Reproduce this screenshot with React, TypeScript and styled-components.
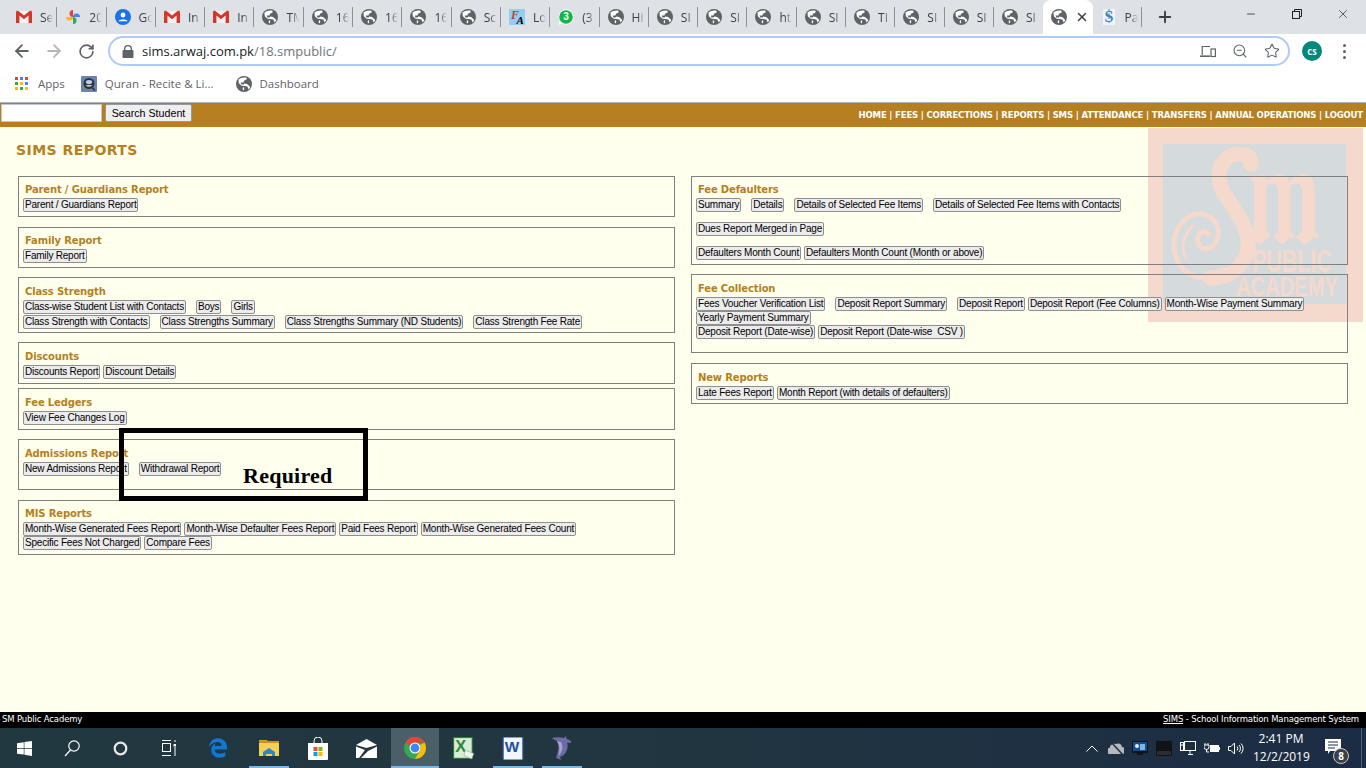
import React from 'react';
import styled, { createGlobalStyle } from 'styled-components';
import { ArrowLeft, ArrowRight, Minus, Plus, RotateCw, Star, X, ZoomOut } from 'lucide-react';
import { FaEdgeLegacy } from 'react-icons/fa';

const GlobalStyle = createGlobalStyle`
  html, body {
    margin: 0;
    padding: 0;
    height: 100%;
    overflow: hidden;
    background: #ffffee;
  }
  * { box-sizing: border-box; }
`;

const Frame = styled.div`
  display: flex;
  flex-direction: column;
  width: 1366px;
  height: 768px;
  font-family: 'Liberation Sans', Arial, sans-serif;
`;

/* browser chrome */
const TabStrip = styled.div`
  display: flex;
  align-items: center;
  height: 34px;
  padding-left: 8px;
  background: #dee1e6;
  flex: none;
`;

const Tab = styled.div<{ $active?: boolean; $noSep?: boolean }>`
  position: relative;
  display: flex;
  align-items: center;
  flex: none;
  width: 49.3px;
  height: 34px;
  padding-left: 8px;
  gap: 8px;
  border-radius: 8px 8px 0 0;
  background: ${(p) => (p.$active ? '#ffffff' : 'transparent')};
  &::after {
    content: '';
    display: ${(p) => (p.$active || p.$noSep ? 'none' : 'block')};
    position: absolute;
    right: 0;
    top: 7px;
    width: 1px;
    height: 20px;
    background: #8f9297;
  }
`;

const TabLabel = styled.span`
  width: 13px;
  overflow: hidden;
  white-space: nowrap;
  font: 12px 'Open Sans', sans-serif;
  color: #3c4043;
  -webkit-mask-image: linear-gradient(to right, #000 45%, transparent 100%);
  mask-image: linear-gradient(to right, #000 45%, transparent 100%);
`;

const NewTab = styled.div`
  display: flex;
  margin-left: 14px;
  color: #3c4043;
`;

const WindowControls = styled.div`
  display: flex;
  margin-left: auto;
  height: 100%;
  align-self: flex-start;
`;

const WindowButton = styled.div`
  display: flex;
  align-items: center;
  justify-content: center;
  width: 46px;
  height: 28px;
  color: #202124;
`;

const Toolbar = styled.div`
  display: flex;
  align-items: center;
  height: 34px;
  padding-left: 6px;
  background: #ffffff;
  flex: none;
`;

const NavButton = styled.div<{ $muted?: boolean }>`
  display: flex;
  align-items: center;
  justify-content: center;
  width: 32px;
  height: 32px;
  color: ${(p) => (p.$muted ? '#b4b6b9' : '#5f6368')};
`;

const Omnibox = styled.div`
  display: flex;
  align-items: center;
  width: 1182px;
  height: 30px;
  margin-left: 6px;
  padding-left: 12px;
  border: 2px solid #aecbfa;
  border-radius: 15px;
`;

const UrlText = styled.div`
  margin-left: 8px;
  font: 13px 'Open Sans', sans-serif;
  color: #202124;
  span { color: #70757a; }
`;

const OmniActions = styled.div`
  display: flex;
  margin-left: auto;
`;

const Avatar = styled.div`
  display: flex;
  align-items: center;
  justify-content: center;
  width: 20px;
  height: 20px;
  margin-left: 12px;
  border-radius: 50%;
  background: #00897b;
  color: #fff;
  font: bold 8px 'Open Sans', sans-serif;
`;

const MenuDots = styled.div`
  display: flex;
  flex-direction: column;
  gap: 3px;
  margin-left: 21px;
  i {
    display: block;
    width: 3px;
    height: 3px;
    border-radius: 50%;
    background: #5f6368;
  }
`;

const Bookmarks = styled.div`
  display: flex;
  align-items: center;
  height: 35px;
  padding: 0 0 3px 15px;
  background: #ffffff;
  border-bottom: 1px solid #b3b3b3;
  flex: none;
`;

const Bookmark = styled.div<{ $ml: number; $gap: number }>`
  display: flex;
  align-items: center;
  gap: ${(p) => p.$gap}px;
  margin-left: ${(p) => p.$ml}px;
  font: 11.5px 'Open Sans', sans-serif;
  color: #5f6368;
`;

/* site header */
const HeaderBar = styled.div`
  display: flex;
  align-items: center;
  justify-content: space-between;
  height: 24px;
  padding: 0 3px 4px 1px;
  background: #b67f20;
  flex: none;
`;

const SearchForm = styled.div`
  display: flex;
  gap: 3px;
`;

const SearchInput = styled.input`
  width: 101px;
  height: 18px;
  padding: 0;
  background: #fff;
  border: 1px solid #c5c5c5;
  outline: none;
`;

const SearchButton = styled.button`
  width: 87px;
  height: 18px;
  padding: 0;
  background: #efefef;
  border: 1px solid #9a9a9a;
  border-radius: 2px;
  font: 10.7px 'Liberation Sans', Arial, sans-serif;
  color: #000;
`;

const TopNav = styled.div`
  margin-top: 4px;
  font: bold 8.5px 'DejaVu Sans', Verdana, sans-serif;
  letter-spacing: -0.16px;
  white-space: pre;
  color: #fff;
`;

const Main = styled.div`
  position: relative;
  flex: 1;
  padding: 14px 18px 0;
  background: #ffffee;
`;

const Watermark = styled.svg`
  position: absolute;
  left: 1148px;
  top: 1px;
`;

const PageTitle = styled.h1`
  position: relative;
  height: 18px;
  margin: 0 0 17px -2px;
  font: bold 14px/19px 'DejaVu Sans', Verdana, sans-serif;
  letter-spacing: 0.45px;
  color: #b67f20;
`;

const Columns = styled.div`
  position: relative;
  display: grid;
  grid-template-columns: 657px 657px;
  column-gap: 16px;
  align-items: start;
`;

const Panel = styled.section<{ $h: number; $mt: number; $pt: number }>`
  height: ${(p) => p.$h}px;
  margin-top: ${(p) => p.$mt}px;
  padding: ${(p) => p.$pt}px 4px 0;
  border: 1px solid #808080;
`;

const PanelTitle = styled.h2`
  height: 14px;
  margin: 0 0 1px 2px;
  font: bold 10px/14px 'DejaVu Sans', Verdana, sans-serif;
  letter-spacing: -0.15px;
  color: #b67f20;
`;

const ButtonRow = styled.div<{ $mt: number }>`
  display: flex;
  margin-top: ${(p) => p.$mt}px;
`;

const ReportButton = styled.button<{ $wide?: boolean }>`
  height: 14px;
  margin-left: ${(p) => (p.$wide ? 10 : 3)}px;
  padding: 0 1px;
  background: #ececec;
  border: 1px solid #8f8f8f;
  border-radius: 2px;
  font: 10px/12px 'Liberation Sans', Arial, sans-serif;
  letter-spacing: -0.21px;
  color: #000;
  white-space: pre;
  &:first-child { margin-left: 0; }
`;

const Callout = styled.div`
  position: absolute;
  left: 119px;
  top: 301px;
  width: 249px;
  height: 73px;
  padding: 31px 0 0 119px;
  border: 5px solid #000;
  font: bold 22px/24px 'Liberation Serif', Cambria, serif;
  letter-spacing: 0.25px;
  color: #000;
`;

const Footer = styled.div`
  display: flex;
  align-items: center;
  justify-content: space-between;
  height: 16px;
  padding: 0 7px 2px 2px;
  background: #000;
  font: 8.5px 'DejaVu Sans', Tahoma, sans-serif;
  letter-spacing: -0.15px;
  color: #fff;
  flex: none;
  u { text-decoration: underline; }
`;

/* windows taskbar */
const Taskbar = styled.div`
  display: flex;
  align-items: stretch;
  height: 40px;
  background: linear-gradient(to right, #223840 0%, #213640 45%, #1c2c44 100%);
  flex: none;
`;

const TaskSlot = styled.div<{ $w?: number; $active?: boolean; $open?: boolean }>`
  position: relative;
  display: flex;
  align-items: center;
  justify-content: center;
  flex: none;
  width: ${(p) => p.$w ?? 49}px;
  background: ${(p) => (p.$active ? '#4a5f67' : 'transparent')};
  &::after {
    content: '';
    display: ${(p) => (p.$open || p.$active ? 'block' : 'none')};
    position: absolute;
    bottom: 0;
    left: ${(p) => (p.$active ? 0 : 5)}px;
    right: ${(p) => (p.$active ? 0 : 4)}px;
    height: 2px;
    background: #76b9ed;
  }
`;

const Tray = styled.div`
  display: flex;
  align-items: center;
  margin-left: auto;
  padding-right: 4px;
`;

const TrayIcon = styled.div`
  display: flex;
  align-items: center;
  justify-content: center;
  width: 24px;
  height: 40px;
`;

const Clock = styled.div`
  width: 56px;
  margin-left: 5px;
  text-align: center;
  white-space: nowrap;
  font: 12px/18px 'Open Sans', sans-serif;
  color: #fff;
`;

const Notify = styled.div`
  position: relative;
  display: flex;
  align-items: center;
  width: 53px;
  height: 40px;
  padding: 0 0 4px 16px;
  border-right: 1px solid #52606e;
`;

const NotifyBadge = styled.span`
  position: absolute;
  left: 24px;
  top: 20px;
  width: 16px;
  height: 16px;
  border-radius: 50%;
  background: #3c3f44;
  border: 1px solid #c9c9c9;
  text-align: center;
  font: bold 10px/14px 'Open Sans', sans-serif;
  color: #fff;
`;

/* icons */
const Globe = () => (
  <svg width="16" height="16" viewBox="0 0 16 16" style={{ flex: 'none' }}>
    <circle cx="8" cy="8" r="8" fill="#5f6368" />
    <path d="M2.5 3.6 C4.5 1.8 8 1 10.5 1.8 L10.6 3.6 L8 4.8 L7.4 6.4 L4.6 6.6 L5.4 8.6 L7.6 8.6 L8.4 7.6 L11 8 L13.4 10 L14.2 11.4 L12.6 13.4 L11.4 10.6 L8.6 10 L5.6 9.8 L2.8 7.2 Z" fill="#fff" />
    <path d="M7 11.2 L8.2 11.6 L8 14.4 L6.6 13.4 Z" fill="#fff" />
  </svg>
);

const Gmail = () => (
  <svg width="16" height="14" viewBox="0 0 16 14" style={{ flex: 'none' }}>
    <path d="M1 1h14v12H1z" fill="#f2f2f2" />
    <path d="M0 2.2 C0 .8 1.4.2 2.4 1 L8 5.4 13.6 1 C14.6.2 16 .8 16 2.2 V13 H12.6 V5.6 L8 9.2 3.4 5.6 V13 H0 Z" fill="#d5362a" />
  </svg>
);

const Photos = () => (
  <svg width="16" height="16" viewBox="0 0 16 16" style={{ flex: 'none' }}>
    <path d="M8 8 V1 A3.5 3.5 0 0 0 4.5 4.5 A3.5 3.5 0 0 0 8 8Z" fill="#ea4335" />
    <path d="M8 8 H1 A3.5 3.5 0 0 0 4.5 11.5 A3.5 3.5 0 0 0 8 8Z" fill="#fbbc04" />
    <path d="M8 8 V15 A3.5 3.5 0 0 0 11.5 11.5 A3.5 3.5 0 0 0 8 8Z" fill="#34a853" />
    <path d="M8 8 H15 A3.5 3.5 0 0 0 11.5 4.5 A3.5 3.5 0 0 0 8 8Z" fill="#4285f4" />
  </svg>
);

const Account = () => (
  <svg width="16" height="16" viewBox="0 0 16 16" style={{ flex: 'none' }}>
    <circle cx="8" cy="8" r="8" fill="#1a73e8" />
    <circle cx="8" cy="6" r="2.4" fill="#fff" />
    <path d="M3.4 12.2 C4 9.8 12 9.8 12.6 12.2Z" fill="#fff" />
  </svg>
);

const FontAwesomeTile = () => (
  <svg width="16" height="16" viewBox="0 0 16 16" style={{ flex: 'none' }}>
    <rect width="16" height="16" fill="#94cdf1" />
    <text x="2" y="10" fontFamily="Liberation Serif" fontStyle="italic" fontWeight="bold" fontSize="12" fill="#d23a3a">F</text>
    <text x="7.5" y="15" fontFamily="Liberation Serif" fontStyle="italic" fontWeight="bold" fontSize="11" fill="#000">A</text>
  </svg>
);

const WhatsApp = () => (
  <svg width="16" height="16" viewBox="0 0 16 16" style={{ flex: 'none' }}>
    <path d="M0.3 15.7 L1.5 11.6 A7.6 7.6 0 1 1 4.4 14.6Z" fill="#fff" />
    <circle cx="8" cy="8" r="6.8" fill="#12b548" />
    <text x="8" y="11.4" textAnchor="middle" fontFamily="Liberation Sans" fontWeight="bold" fontSize="10" fill="#fff">3</text>
  </svg>
);

const DollarTile = () => (
  <svg width="16" height="16" viewBox="0 0 16 16" style={{ flex: 'none' }}>
    <rect x="2" width="12" height="16" fill="#f0f4fa" />
    <text x="8" y="13.4" textAnchor="middle" fontFamily="Liberation Serif" fontWeight="bold" fontSize="16" fill="#3f7fc4">S</text>
    <path d="M8 0v16" stroke="#3f7fc4" strokeWidth="1" strokeDasharray="2 2" />
  </svg>
);

const Lock = () => (
  <svg width="12" height="13" viewBox="0 0 12 13" style={{ flex: 'none' }}>
    <path d="M2 5V3.8a4 3.8 0 0 1 8 0V5h.6c.5 0 .9.4.9.9V12c0 .5-.4 1-.9 1H1.4c-.5 0-.9-.5-.9-1V5.900c0-.5.4-.9.9-.9zm1.400 0h5.200V3.800a2.600 2.500 0 0 0-5.200 0z" fill="#5f6368" />
  </svg>
);

const AppsGrid = () => (
  <svg width="13" height="13" viewBox="0 0 13 13" style={{ flex: 'none' }}>
    {['#ea4335', '#4285f4', '#ea4335', '#34a853', '#fbbc04', '#4285f4', '#fbbc04', '#34a853', '#fbbc04'].map((c, i) => (
      <rect key={i} x={(i % 3) * 5} y={Math.floor(i / 3) * 5} width="3" height="3" fill={c} />
    ))}
  </svg>
);

const QuranTile = () => (
  <svg width="16" height="16" viewBox="0 0 16 16" style={{ flex: 'none' }}>
    <rect width="16" height="16" rx="1" fill="#6d84a8" />
    <circle cx="8" cy="7.500" r="5.500" fill="#24344f" />
    <ellipse cx="8" cy="6" rx="3.200" ry="2" fill="#b9cde4" />
    <path d="M4.500 9.500 Q8 12 11.500 9.500 Q8 8 4.500 9.500Z" fill="#e4c77a" />
    <path d="M11.500 12 L14 14.500" stroke="#24344f" strokeWidth="1.500" />
  </svg>
);

const Restore = () => (
  <svg width="10" height="10" viewBox="0 0 10 10" fill="none" stroke="#202124">
    <rect x="0.500" y="2.500" width="7" height="7" />
    <path d="M2.500 2.500V.5h7v7h-2" />
  </svg>
);

const Devices = () => (
  <svg width="16" height="13" viewBox="0 0 16 13" fill="none" stroke="#5f6368" strokeWidth="1.200">
    <path d="M10 1.500H2.200V10" />
    <path d="M0 11.200h10" strokeWidth="1.600" />
    <rect x="11" y="4" width="4.400" height="7.500" />
  </svg>
);

// school crest behind the panels
const Watermarks = () => (
  <Watermark width="215" height="194" viewBox="0 0 215 194">
    <rect width="215" height="194" fill="#f5d9cc" />
    <rect x="15" y="16" width="183" height="160" fill="#d5dadc" />
    <g fill="none" stroke="#f5d9cc" strokeLinecap="round">
      <path d="M102 30 C96 24 84 25 77 32 C68 42 70 56 78 68 C88 84 98 96 100 112 C102 134 84 150 62 150" strokeWidth="15" />
      <path d="M62 150 C44 152 28 140 26 120 C24 100 40 84 54 86 C68 88 74 102 68 114 C62 124 52 122 50 114 C48 106 56 100 60 106" strokeWidth="5" />
      <path d="M44 98 C36 108 32 120 38 130" strokeWidth="3" />
    </g>
    <g fill="#f5d9cc">
      <circle cx="103" cy="36" r="8" />
      <text x="100" y="110" fontFamily="Liberation Serif" fontWeight="bold" fontSize="135" textLength="72" lengthAdjust="spacingAndGlyphs">m</text>
      <path d="M102 108h20l-10 9zM124 108h20l-10 9zM146 108h22l-11 9z" />
      <text x="104" y="144" fontFamily="Liberation Sans" fontWeight="bold" fontSize="32" textLength="80" lengthAdjust="spacingAndGlyphs">PUBLIC</text>
      <text x="88" y="168" fontFamily="Liberation Sans" fontWeight="bold" fontSize="28" textLength="102" lengthAdjust="spacingAndGlyphs">ACADEMY</text>
    </g>
  </Watermark>
);

const WinLogo = () => (
  <svg width="15" height="15" viewBox="0 0 15 15" fill="#fff">
    <path d="M0 2.200 6.800 1.200V7H0zM7.400 1.100 15 0V7H7.400zM0 7.700H6.800V13.600L0 12.700zM7.400 7.700H15V15L7.400 13.800z" />
  </svg>
);

const SearchGlyph = () => (
  <svg width="16" height="17" viewBox="0 0 16 17" fill="none" stroke="#fff" strokeWidth="1.200">
    <circle cx="10" cy="6" r="5.200" />
    <path d="M6.500 10 1 16" />
  </svg>
);

const Cortana = () => (
  <svg width="15" height="15" viewBox="0 0 15 15" fill="none" stroke="#e8e8e8" strokeWidth="2.200">
    <circle cx="7.500" cy="7.500" r="5.800" />
  </svg>
);

const TaskView = () => (
  <svg width="15" height="16" viewBox="0 0 15 16" fill="none" stroke="#fff">
    <path d="M1 .5h9M1 15.500h9M14 0v2M14 7v9" />
    <rect x="1.500" y="3.500" width="8" height="8" />
    <rect x="12.500" y="4" width="2.500" height="2.500" fill="#fff" stroke="none" />
  </svg>
);

const Explorer = () => (
  <svg width="20" height="18" viewBox="0 0 20 18">
    <path d="M0 1h8l1 1.500h-9z" fill="#d9a22e" />
    <rect y="2" width="20" height="3" fill="#c98f24" />
    <rect y="4" width="20" height="13" fill="#f6cf57" />
    <path d="M4 17v-4l6-4 6 4v4h-3v-2H7v2z" fill="#2f86c9" />
  </svg>
);

const Store = () => (
  <svg width="20" height="23" viewBox="0 0 20 23">
    <path d="M6 6V4a4 4 0 0 1 8 0v2" fill="none" stroke="#fff" strokeWidth="1" />
    <path d="M0 6h20v16a1 1 0 0 1-1 1H1a1 1 0 0 1-1-1z" fill="#fff" />
    <rect x="5.500" y="10" width="4" height="4" fill="#f25022" />
    <rect x="10.500" y="10" width="4" height="4" fill="#7fba00" />
    <rect x="5.500" y="15" width="4" height="4" fill="#00a4ef" />
    <rect x="10.500" y="15" width="4" height="4" fill="#ffb900" />
  </svg>
);

const Mail = () => (
  <svg width="21" height="19" viewBox="0 0 21 19">
    <path d="M0 6 10.500 0 21 6 10.500 9z" fill="#fff" />
    <path d="M0 7.500 9 11 3 19H0zM21 7.500V19H5l7-7z" fill="#fff" />
  </svg>
);

const ChromeLogo = () => (
  <svg width="22" height="22" viewBox="0 0 20 20">
    <circle cx="10" cy="10" r="10" fill="#34a853" />
    <path d="M10 0a10 10 0 0 1 8.660 5H10a5 5 0 0 0-4.700 3.300L1.700 4.300A10 10 0 0 1 10 0z" fill="#ea4335" />
    <path d="M18.660 5A10 10 0 0 1 10 20l4.300-7.500A5 5 0 0 0 14.300 7.400z" fill="#fbbc04" />
    <circle cx="10" cy="10" r="5" fill="#fff" />
    <circle cx="10" cy="10" r="4" fill="#4285f4" />
  </svg>
);

const Excel = () => (
  <svg width="22" height="23" viewBox="0 0 20 21">
    <rect x="0" y="0" width="18" height="20" fill="#2f7d3b" />
    <rect x="1" y="1" width="16" height="18" fill="#d9ecd5" />
    <text x="7" y="14" textAnchor="middle" fontFamily="Liberation Sans" fontWeight="bold" fontSize="15" fill="#2a8a3c">X</text>
    <path d="M11 12l8 3-2 5-7-3z" fill="#eef3ec" stroke="#7da97f" strokeWidth="0.500" />
  </svg>
);

const Word = () => (
  <svg width="22" height="23" viewBox="0 0 20 21">
    <rect x="1" y="0" width="18" height="21" fill="#f2f5fb" stroke="#2a5699" strokeWidth="1" />
    <text x="9" y="14" textAnchor="middle" fontFamily="Liberation Sans" fontWeight="bold" fontSize="14" fill="#1d4fa3">W</text>
  </svg>
);

const Dolphin = () => (
  <svg width="20" height="24" viewBox="0 0 20 24">
    <path d="M0 2 C4 1 8 1 12 2 L14 0 L14.500 2.800 C18 4 20 6 19 7 L15 6.500 C17 12 14 19 8 21 L9 24 L4 22 C6 16 8 10 5 5 C3 4 1 3.500 0 2Z" fill="#6f6ba8" />
    <path d="M5 5C8 10 8 15 6 20C10 17 12 11 9 6Z" fill="#a7a4d0" />
  </svg>
);

const Caret = () => (
  <svg width="12" height="7" viewBox="0 0 12 7" fill="none" stroke="#fff">
    <path d="M.5 6.500 6 1l5.500 5.500" />
  </svg>
);

const CloudOff = () => (
  <svg width="16" height="13" viewBox="0 0 16 13">
    <path d="M1 12a3 3 0 0 1 .5-6A5 5 0 0 1 8 2a4 4 0 0 1 6 3 3.500 3.500 0 0 1 0 7z" fill="#b5b9bd" />
    <path d="M3 0 15 13" stroke="#1e2f42" strokeWidth="1.500" />
  </svg>
);

const MonitorTray = () => (
  <svg width="16" height="15" viewBox="0 0 16 15">
    <rect width="16" height="12" fill="#0e1418" />
    <rect x="1" y="1" width="14" height="9" fill="#154e8a" />
    <circle cx="5" cy="5" r="2" fill="#dfe9f3" />
    <rect x="8" y="3" width="5" height="6" fill="#7cb4e4" />
    <rect x="5" y="12" width="6" height="2" fill="#0e1418" />
  </svg>
);

const DarkSquare = () => (
  <svg width="16" height="15" viewBox="0 0 16 15">
    <rect width="16" height="15" fill="#111417" />
    <rect x="1" y="10" width="14" height="4" fill="#2a2d30" />
  </svg>
);

const NetworkIcon = () => (
  <svg width="16" height="14" viewBox="0 0 16 14" fill="none" stroke="#fff">
    <rect x="4.500" y=".5" width="11" height="9" />
    <rect x=".5" y="1.500" width="3" height="8" fill="#1e2f42" />
    <path d="M8 13.500h5M10 9.500v4M1 4h2" />
  </svg>
);

const PowerIcon = () => (
  <svg width="16" height="11" viewBox="0 0 16 11">
    <path d="M1 0v2M4 0v2M0 2h5v2a2.500 2.500 0 0 1-5 0zM2.500 6v3H5" fill="none" stroke="#fff" />
    <rect x="6" y="2" width="9" height="7" fill="#fff" />
    <rect x="15" y="4" width="1" height="3" fill="#fff" />
  </svg>
);

const VolumeIcon = () => (
  <svg width="16" height="13" viewBox="0 0 16 13" fill="none" stroke="#fff">
    <path d="M.5 4.500h2.500L6.500 1v11L3 8.500H.5z" />
    <path d="M9 4.500a3 3 0 0 1 0 4M11 3a5 5 0 0 1 0 7M13 1.500a7 7 0 0 1 0 10" />
  </svg>
);

const ActionCenter = () => (
  <svg width="16" height="15" viewBox="0 0 16 15">
    <path d="M0 0h16v12H5l-2 3v-3H0z" fill="#fff" />
    <path d="M3 3h10M3 6h10M3 9h7" stroke="#1c2c44" />
  </svg>
);

/* content */
type Report = { label: string; wide?: boolean };
type Row = { mt: number; items: Report[] };
type Group = { title: string; h: number; mt: number; pt: number; rows: Row[] };

const r = (label: string, wide?: boolean): Report => ({ label, wide });

const tabs: { icon: React.ReactNode; label: string }[] = [
  { icon: <Gmail />, label: 'Se' },
  { icon: <Photos />, label: '20' },
  { icon: <Account />, label: 'Go' },
  { icon: <Gmail />, label: 'In' },
  { icon: <Gmail />, label: 'In' },
  { icon: <Globe />, label: 'TM' },
  { icon: <Globe />, label: '16' },
  { icon: <Globe />, label: '16' },
  { icon: <Globe />, label: '16' },
  { icon: <Globe />, label: 'Sc' },
  { icon: <FontAwesomeTile />, label: 'Lo' },
  { icon: <WhatsApp />, label: '(3' },
  { icon: <Globe />, label: 'Hi' },
  { icon: <Globe />, label: 'SI' },
  { icon: <Globe />, label: 'SI' },
  { icon: <Globe />, label: 'ht' },
  { icon: <Globe />, label: 'SI' },
  { icon: <Globe />, label: 'TI' },
  { icon: <Globe />, label: 'SI' },
  { icon: <Globe />, label: 'SI' },
  { icon: <Globe />, label: 'SI' },
];

const leftGroups: Group[] = [
  { title: 'Parent / Guardians Report', h: 41, mt: 0, pt: 6, rows: [{ mt: 0, items: [r('Parent / Guardians Report')] }] },
  { title: 'Family Report', h: 41, mt: 10, pt: 6, rows: [{ mt: 0, items: [r('Family Report')] }] },
  {
    title: 'Class Strength',
    h: 56,
    mt: 9,
    pt: 7,
    rows: [
      { mt: 0, items: [r('Class-wise Student List with Contacts'), r('Boys', true), r('Girls', true)] },
      {
        mt: 1,
        items: [
          r('Class Strength with Contacts'),
          r('Class Strengths Summary', true),
          r('Class Strengths Summary (ND Students)', true),
          r('Class Strength Fee Rate', true),
        ],
      },
    ],
  },
  { title: 'Discounts', h: 42, mt: 9, pt: 7, rows: [{ mt: 0, items: [r('Discounts Report'), r('Discount Details')] }] },
  { title: 'Fee Ledgers', h: 42, mt: 4, pt: 7, rows: [{ mt: 0, items: [r('View Fee Changes Log')] }] },
  {
    title: 'Admissions Report',
    h: 51,
    mt: 9,
    pt: 7,
    rows: [{ mt: 0, items: [r('New Admissions Report'), r('Withdrawal Report', true)] }],
  },
  {
    title: 'MIS Reports',
    h: 55,
    mt: 10,
    pt: 6,
    rows: [
      {
        mt: 0,
        items: [
          r('Month-Wise Generated Fees Report'),
          r('Month-Wise Defaulter Fees Report'),
          r('Paid Fees Report'),
          r('Month-Wise Generated Fees Count'),
        ],
      },
      { mt: 0, items: [r('Specific Fees Not Charged'), r('Compare Fees')] },
    ],
  },
];

const rightGroups: Group[] = [
  {
    title: 'Fee Defaulters',
    h: 89,
    mt: 0,
    pt: 6,
    rows: [
      {
        mt: 0,
        items: [
          r('Summary'),
          r('Details', true),
          r('Details of Selected Fee Items', true),
          r('Details of Selected Fee Items with Contacts', true),
        ],
      },
      { mt: 10, items: [r('Dues Report Merged in Page')] },
      { mt: 10, items: [r('Defaulters Month Count'), r('Defaulters Month Count (Month or above)')] },
    ],
  },
  {
    title: 'Fee Collection',
    h: 79,
    mt: 9,
    pt: 7,
    rows: [
      {
        mt: 0,
        items: [
          r('Fees Voucher Verification List'),
          r('Deposit Report Summary', true),
          r('Deposit Report', true),
          r('Deposit Report (Fee Columns)'),
          r('Month-Wise Payment Summary'),
        ],
      },
      { mt: 0, items: [r('Yearly Payment Summary')] },
      { mt: 0, items: [r('Deposit Report (Date-wise)'), r('Deposit Report (Date-wise  CSV )')] },
    ],
  },
  {
    title: 'New Reports',
    h: 41,
    mt: 10,
    pt: 7,
    rows: [{ mt: 0, items: [r('Late Fees Report'), r('Month Report (with details of defaulters)')] }],
  },
];

const GroupList = ({ groups }: { groups: Group[] }) => (
  <div>
    {groups.map((group) => (
      <Panel key={group.title} $h={group.h} $mt={group.mt} $pt={group.pt}>
        <PanelTitle>{group.title}</PanelTitle>
        {group.rows.map((row, i) => (
          <ButtonRow key={i} $mt={row.mt}>
            {row.items.map((item) => (
              <ReportButton key={item.label} $wide={item.wide}>
                {item.label}
              </ReportButton>
            ))}
          </ButtonRow>
        ))}
      </Panel>
    ))}
  </div>
);

const App = () => (
  <Frame>
    <GlobalStyle />
    <TabStrip>
      {tabs.map((tab, i) => (
        <Tab key={i} $noSep={i === 20}>
          {tab.icon}
          <TabLabel>{tab.label}</TabLabel>
        </Tab>
      ))}
      <Tab $active>
        <Globe />
        <X size={14} color="#3c4043" strokeWidth={2.5} />
      </Tab>
      <Tab>
        <DollarTile />
        <TabLabel>Pa</TabLabel>
      </Tab>
      <NewTab>
        <Plus size={18} strokeWidth={2.5} />
      </NewTab>
      <WindowControls>
        <WindowButton>
          <Minus size={12} strokeWidth={1.5} />
        </WindowButton>
        <WindowButton>
          <Restore />
        </WindowButton>
        <WindowButton>
          <X size={14} strokeWidth={1.2} />
        </WindowButton>
      </WindowControls>
    </TabStrip>
    <Toolbar>
      <NavButton>
        <ArrowLeft size={20} strokeWidth={2.2} />
      </NavButton>
      <NavButton $muted>
        <ArrowRight size={20} strokeWidth={2.2} />
      </NavButton>
      <NavButton>
        <RotateCw size={17} strokeWidth={2.4} />
      </NavButton>
      <Omnibox>
        <Lock />
        <UrlText>
          sims.arwaj.com.pk<span>/18.smpublic/</span>
        </UrlText>
        <OmniActions>
          <NavButton>
            <Devices />
          </NavButton>
          <NavButton>
            <ZoomOut size={16} strokeWidth={1.6} />
          </NavButton>
          <NavButton>
            <Star size={16} strokeWidth={1.6} />
          </NavButton>
        </OmniActions>
      </Omnibox>
      <Avatar>CS</Avatar>
      <MenuDots>
        <i />
        <i />
        <i />
      </MenuDots>
    </Toolbar>
    <Bookmarks>
      <Bookmark $ml={0} $gap={10}>
        <AppsGrid />
        Apps
      </Bookmark>
      <Bookmark $ml={16} $gap={8}>
        <QuranTile />
        Quran - Recite &amp; Li...
      </Bookmark>
      <Bookmark $ml={22} $gap={8}>
        <Globe />
        Dashboard
      </Bookmark>
    </Bookmarks>
    <HeaderBar>
      <SearchForm>
        <SearchInput />
        <SearchButton>Search Student</SearchButton>
      </SearchForm>
      <TopNav>HOME | FEES | CORRECTIONS | REPORTS | SMS | ATTENDANCE | TRANSFERS | ANNUAL OPERATIONS | LOGOUT</TopNav>
    </HeaderBar>
    <Main>
      <Watermarks />
      <PageTitle>SIMS REPORTS</PageTitle>
      <Columns>
        <GroupList groups={leftGroups} />
        <GroupList groups={rightGroups} />
      </Columns>
      <Callout>Required</Callout>
    </Main>
    <Footer>
      <span>SM Public Academy</span>
      <span>
        <u>SIMS</u> - School Information Management System
      </span>
    </Footer>
    <Taskbar>
      <TaskSlot $w={48}>
        <WinLogo />
      </TaskSlot>
      <TaskSlot $w={48}>
        <SearchGlyph />
      </TaskSlot>
      <TaskSlot $w={48}>
        <Cortana />
      </TaskSlot>
      <TaskSlot $w={48}>
        <TaskView />
      </TaskSlot>
      <TaskSlot $w={52}>
        <FaEdgeLegacy size={20} color="#0f78d4" />
      </TaskSlot>
      <TaskSlot $open>
        <Explorer />
      </TaskSlot>
      <TaskSlot>
        <Store />
      </TaskSlot>
      <TaskSlot>
        <Mail />
      </TaskSlot>
      <TaskSlot $active $w={48}>
        <ChromeLogo />
      </TaskSlot>
      <TaskSlot>
        <Excel />
      </TaskSlot>
      <TaskSlot $open>
        <Word />
      </TaskSlot>
      <TaskSlot $open>
        <Dolphin />
      </TaskSlot>
      <Tray>
        <TrayIcon>
          <Caret />
        </TrayIcon>
        <TrayIcon>
          <CloudOff />
        </TrayIcon>
        <TrayIcon>
          <MonitorTray />
        </TrayIcon>
        <TrayIcon>
          <DarkSquare />
        </TrayIcon>
        <TrayIcon>
          <NetworkIcon />
        </TrayIcon>
        <TrayIcon>
          <PowerIcon />
        </TrayIcon>
        <TrayIcon>
          <VolumeIcon />
        </TrayIcon>
        <Clock>
          2:41 PM
          <br />
          12/2/2019
        </Clock>
        <Notify>
          <ActionCenter />
          <NotifyBadge>8</NotifyBadge>
        </Notify>
      </Tray>
    </Taskbar>
  </Frame>
);

export default App;
